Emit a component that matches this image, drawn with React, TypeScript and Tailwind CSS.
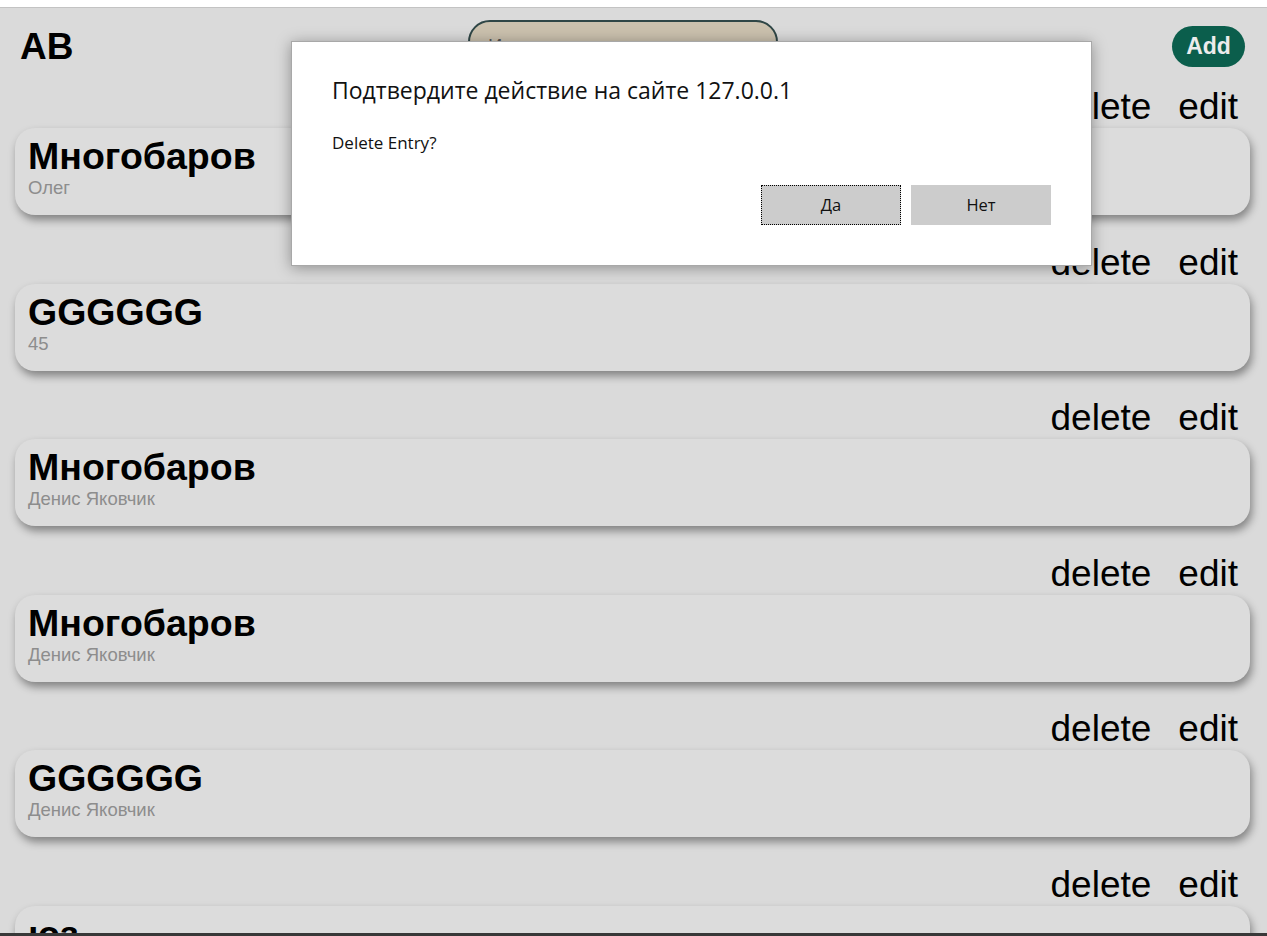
import React from "react";

const rows = [
  { title: "Многобаров", sub: "Олег" },
  { title: "GGGGGG", sub: "45" },
  { title: "Многобаров", sub: "Денис Яковчик" },
  { title: "Многобаров", sub: "Денис Яковчик" },
  { title: "GGGGGG", sub: "Денис Яковчик" },
  { title: "юз", sub: "Денис Яковчик" },
];

export default function App() {
  return (
    <div
      className="relative h-[936px] w-full overflow-hidden bg-[#dadada] text-black"
      style={{ fontFamily: '"Liberation Sans", Arial, sans-serif' }}
    >
      <div className="h-[8px] bg-white border-b border-[#c3c3c3]" />
      <header className="flex h-[78px] items-center">
        <div className="w-[468px] pl-[20px] mb-[1px] text-[37px] font-bold leading-[42px]">AB</div>
        <div className="self-start mt-[12px] h-[52px] w-[310px] rounded-[22px] border-2 border-[#2f4646] bg-[#cbc1ae] px-[18px] flex items-center">
          <span className="text-[20px] text-[#555]">Искать</span>
        </div>
        <div className="flex-1" />
        <button className="mr-[22px] mb-[2px] h-[41px] w-[73px] rounded-full bg-[#0b5e4c] text-[23px] font-bold text-[#ececec]">
          Add
        </button>
      </header>
      <main>
        {rows.map((r, i) => (
          <section key={i} className={i === 0 ? "" : "mt-[26.5px]"}>
            <div className="flex justify-end pr-[29px] text-[37px] leading-[42px]">
              <span>delete</span>
              <span className="ml-[27px]">edit</span>
            </div>
            <div className="ml-[15px] mr-[17px] h-[87px] rounded-[20px] bg-[#dcdcdc] pl-[13px] pt-[7px] shadow-[2px_5px_8px_rgba(0,0,0,0.4)]">
              <div className="text-[37.5px] font-bold leading-[42px]">{r.title}</div>
              <div className="text-[18.5px] leading-[21px] text-[#8d8d8d]">{r.sub}</div>
            </div>
          </section>
        ))}
      </main>

      <div
        className="absolute left-[291px] top-[41px] h-[225px] w-[801px] border border-[#a8a8a8] bg-white shadow-[0_2px_14px_rgba(0,0,0,0.35)] pl-[40px] pr-[40px]"
        style={{ fontFamily: '"Open Sans", "Noto Sans", sans-serif' }}
      >
        <div className="mt-[32px] text-[23px] leading-[32px] text-[#111]">
          Подтвердите действие на сайте 127.0.0.1
        </div>
        <div className="mt-[25px] text-[17px] leading-[24px] text-[#111]">Delete Entry?</div>
        <div className="mt-[30px] flex justify-end gap-[10px]">
          <button className="h-[40px] w-[140px] border border-dotted border-black bg-[#cccccc] text-[16.5px] text-[#111]">
            Да
          </button>
          <button className="h-[40px] w-[140px] bg-[#cccccc] text-[16.5px] text-[#111]">Нет</button>
        </div>
      </div>

      <div className="absolute bottom-0 left-0 h-[3px] w-full bg-[#383838]" />
    </div>
  );
}
